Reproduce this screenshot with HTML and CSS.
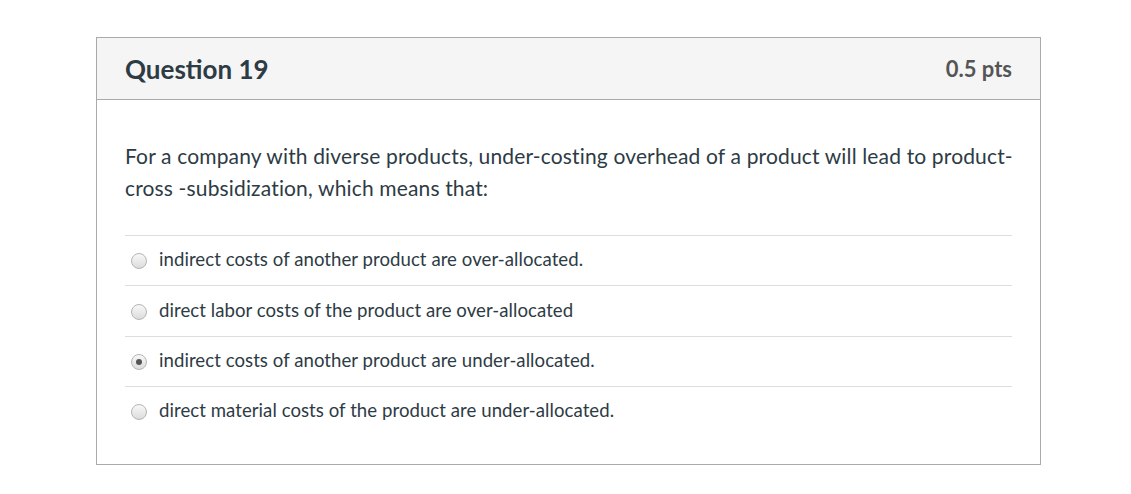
FILE: index.html
```html
<!DOCTYPE html>
<html>
<head>
<meta charset="utf-8">
<link rel="stylesheet" href="styles.css">
</head>
<body>
<div class="page">
  <div class="question">
    <div class="q-header">
      <h2 class="q-title">Question 19</h2>
      <span class="q-points">0.5 pts</span>
    </div>
    <div class="q-body">
      <p class="q-text">For a company with diverse products, under-costing overhead of a product will lead to product-cross -subsidization, which means that:</p>
      <div class="answers">
        <label class="answer"><span class="radio"></span><span class="a-text">indirect costs of another product are over-allocated.</span></label>
        <label class="answer"><span class="radio"></span><span class="a-text">direct labor costs of the product are over-allocated</span></label>
        <label class="answer"><span class="radio checked"></span><span class="a-text">indirect costs of another product are under-allocated.</span></label>
        <label class="answer"><span class="radio"></span><span class="a-text">direct material costs of the product are under-allocated.</span></label>
      </div>
    </div>
  </div>
</div>
</body>
</html>
```
FILE: styles.css
```css
html, body {
  margin: 0;
  padding: 0;
  background: #ffffff;
}
body {
  font-family: Lato, "Open Sans", sans-serif;
  color: #2d3b45;
}
.page {
  padding: 37px 0 0 96px;
}
.question {
  width: 943px;
  border: 1px solid #aaaaaa;
}
.q-header {
  display: flex;
  align-items: center;
  justify-content: space-between;
  background: #f5f5f5;
  border-bottom: 1px solid #aaaaaa;
  height: 61px;
  padding: 0 28px;
}
.q-title {
  margin: 0;
  font-size: 26px;
  font-weight: 700;
  color: #2d3b45;
}
.q-points {
  font-size: 22px;
  font-weight: 700;
  color: #555555;
}
.q-body {
  padding: 40px 28px 27px 28px;
}
.q-text {
  margin: 0 -6px 31px 0;
  font-size: 21px;
  line-height: 32px;
  letter-spacing: 0.15px;
}
.answers {
  display: flex;
  flex-direction: column;
}
.answer {
  display: flex;
  align-items: center;
  gap: 12px;
  height: 50.4px;
  box-sizing: border-box;
  border-top: 1px solid #dddddd;
  padding-left: 6px;
  font-size: 18.6px;
  letter-spacing: 0.05px;
}
.a-text {
  padding-bottom: 3px;
}
.radio {
  width: 16px;
  height: 16px;
  border-radius: 50%;
  border: 1px solid #b5b5b5;
  background: linear-gradient(#f8f8f8, #dcdcdc);
  box-sizing: border-box;
  position: relative;
  flex: none;
  margin-top: 1px;
}
.radio.checked::after {
  content: "";
  position: absolute;
  left: 4px;
  top: 4px;
  width: 6px;
  height: 6px;
  border-radius: 50%;
  background: #555555;
}
```
